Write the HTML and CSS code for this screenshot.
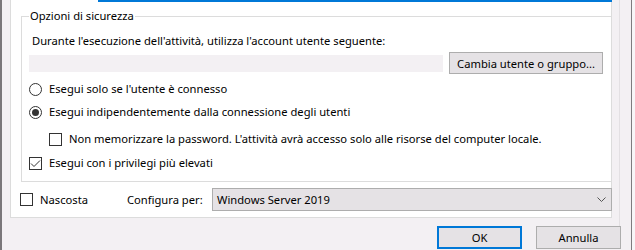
FILE: index.html
```html
<!DOCTYPE html>
<html lang="it">
<head>
    <meta charset="UTF-8">
    <title>Proprietà attività</title>
    <link rel="stylesheet" href="styles.css">
</head>
<body>
<div class="frame-left"></div>
<div class="dialog">
    <div class="tab-area">
        <div class="tab-page">
            <div class="desc-field"></div>
            <fieldset class="group">
                <legend>Opzioni di sicurezza</legend>
                <p class="account-label">Durante l'esecuzione dell'attività, utilizza l'account utente seguente:</p>
                <div class="account-row">
                    <div class="account-field"></div>
                    <button class="btn btn-user">Cambia utente o gruppo...</button>
                </div>
                <div class="option"><span class="radio"></span>Esegui solo se l'utente è connesso</div>
                <div class="option"><span class="radio on"></span>Esegui indipendentemente dalla connessione degli utenti</div>
                <div class="option sub"><span class="check"></span>Non memorizzare la password. L'attività avrà accesso solo alle risorse del computer locale.</div>
                <div class="option last">
                    <span class="check">
                        <svg width="11" height="11" viewBox="0 0 11 11" fill="none" stroke="#333" stroke-width="1">
                            <path d="M1 5.5 L4 8.5 L10 2.5"></path>
                        </svg>
                    </span>
                    Esegui con i privilegi più elevati
                </div>
            </fieldset>
            <div class="config-row">
                <div class="option"><span class="check"></span>Nascosta</div>
                <span>Configura per:</span>
                <div class="combo">
                    <span>Windows Server 2019</span>
                    <svg width="9" height="5" viewBox="0 0 9 5" fill="none" stroke="#555" stroke-width="1">
                        <path d="M0.5 0.5 L4.5 4.5 L8.5 0.5"></path>
                    </svg>
                </div>
            </div>
        </div>
    </div>
    <div class="actions">
        <button class="btn btn-default">OK</button>
        <button class="btn">Annulla</button>
    </div>
</div>
<div class="frame-right"></div>
</body>
</html>
```

FILE: styles.css
```css
:root {
    --bg-color: #f3f0f3;
    --panel-bg: #ffffff;
    --line-color: #dcdcdc;
    --control-border: #adadad;
    --control-bg: #e5e2e5;
    --glyph-color: #333333;
    --focus-color: #0078d7;
}

* {
    box-sizing: border-box;
    margin: 0;
    padding: 0;
}

body {
    font-family: "Noto Sans", "Open Sans", sans-serif;
    font-size: 11.2px;
    color: #000;
    background-color: var(--bg-color);
    height: 250px;
    overflow: hidden;
    display: flex;
}

.frame-left {
    width: 2px;
    flex: none;
    background-color: #7a777a;
}

.dialog {
    width: 629px;
    flex: none;
    display: flex;
    flex-direction: column;
}

.frame-right {
    flex: 1;
    border-left: 1px solid #7f7c7f;
    background-color: #f8f6f8;
}

.tab-area {
    width: 618px;
    height: 226px;
    padding-left: 8px;
    border-right: 1px solid #e3e0e3;
}

.tab-page {
    width: 602px;
    background-color: var(--panel-bg);
    border: 1px solid var(--line-color);
    border-top: 0;
    padding-bottom: 6px;
}

.desc-field {
    height: 2px;
    margin: 0 -1px 0 87px;
    border: 1px solid var(--focus-color);
    border-top: 0;
    border-bottom-width: 2px;
}

.group {
    margin: 6px -1px 0 10px;
    border: 1px solid var(--line-color);
    padding: 9px 8px 10px 7px;
}

.group legend {
    padding: 0 1px;
    line-height: 16px;
}

.account-label {
    line-height: 16px;
    padding-left: 3px;
}

.account-row {
    display: flex;
    align-items: center;
    gap: 6px;
    height: 22px;
    margin-top: 3px;
}

.account-field {
    flex: 1;
    height: 17px;
    background-color: var(--bg-color);
}

.btn {
    font: inherit;
    color: #000;
    height: 22px;
    border: 1px solid var(--control-border);
    background-color: var(--control-bg);
}

.btn-user {
    width: 154px;
}

.option {
    display: flex;
    align-items: center;
    height: 16px;
    line-height: 16px;
    margin-top: 7px;
    white-space: nowrap;
}

.option.sub {
    margin-left: 20px;
    margin-top: 11px;
}

.option.last {
    margin-top: 8px;
}

.radio,
.check {
    width: 13px;
    height: 13px;
    flex: none;
    border: 1px solid var(--glyph-color);
    background-color: #fff;
    margin-right: 7px;
    display: flex;
    align-items: center;
    justify-content: center;
}

.radio {
    border-radius: 50%;
}

.radio.on::after {
    content: "";
    width: 7px;
    height: 7px;
    border-radius: 50%;
    background-color: var(--glyph-color);
}

.config-row {
    display: grid;
    grid-template-columns: 107px 85px 1fr;
    align-items: center;
    padding-left: 9px;
    margin: 6px -1px 0 0;
}

.config-row .option {
    margin-top: 0;
}

.combo {
    height: 23px;
    border: 1px solid var(--control-border);
    background-color: var(--control-bg);
    display: flex;
    align-items: center;
    justify-content: space-between;
    padding: 0 5px 0 4px;
}

.actions {
    display: flex;
    justify-content: flex-end;
    gap: 14px;
    padding-right: 10px;
}

.actions .btn {
    width: 85px;
    height: 23px;
}

.btn-default {
    border: 2px solid var(--focus-color);
}
```
